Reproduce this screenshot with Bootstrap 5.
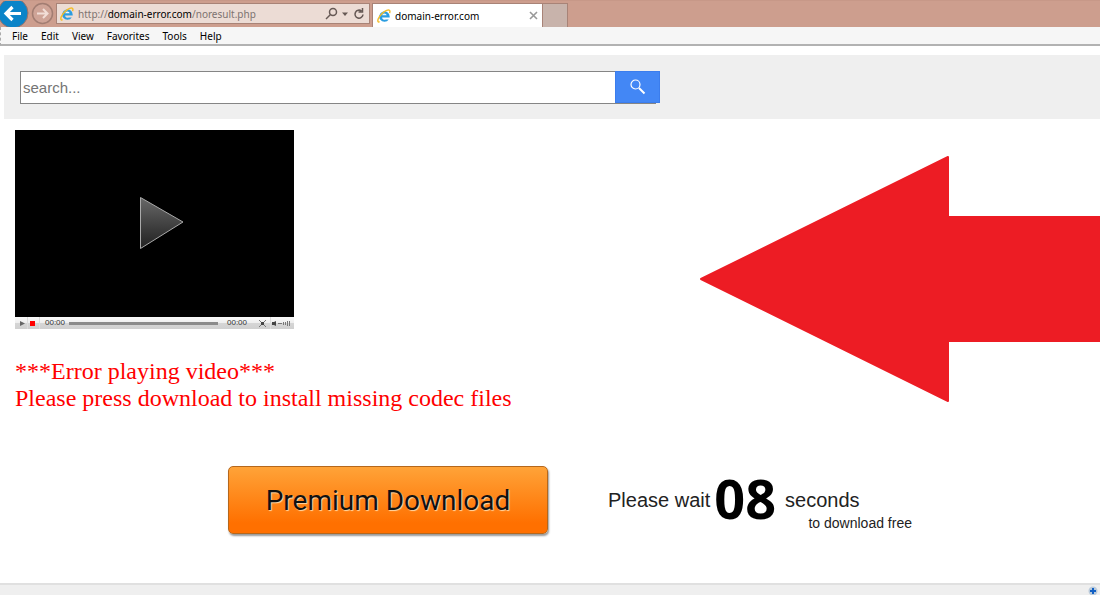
<!DOCTYPE html>
<html lang="en">
<head>
<meta charset="utf-8">
<meta name="viewport" content="width=device-width, initial-scale=1">
<title>domain-error.com</title>
<link rel="stylesheet" href="https://cdn.jsdelivr.net/npm/bootstrap@5.3.0/dist/css/bootstrap.min.css">
<style>
body { font-family: "Noto Sans", "Open Sans", sans-serif; font-size: 10px; line-height: 16px; color: #000; background: #fff; }
svg { display: block; flex: none; }
.chrome-bar { height: 27px; background: #cd9e8e; border-top: 1px solid #c79888; }
.chrome-bar button { background: none; border: 0; padding: 0; }
.address { width: 314px; height: 21px; margin: 2px 2px 0 2px; background: #ecdcd5; border: 1px solid #a88377; padding: 0 4px 0 3px; }
.address-text { color: #7d7370; }
.address-text b { color: #000; font-weight: 400; }
.tab-open { width: 171px; height: 24px; margin-top: 2px; background: #fff; border: 1px solid #a88377; border-bottom: 0; padding: 0 4px; }
.tab-new { width: 25px; height: 24px; margin-top: 2px; }
.chrome-bar .tab-new { background: #c8b3ab; border: 1px solid #a88377; border-left: 0; border-bottom: 0; }
.menu-bar { height: 19px; background: #f6f6f6; border-bottom: 2px solid #b2b2b2; border-left: 1px dashed #aaa; padding-left: 11px; gap: 13px; }
.menu-bar a { color: #000; text-decoration: none; }
.search-band { margin: 9px 0 0 4px; padding: 16px; height: 64px; background: #efefef; }
.search-box { width: 640px; max-width: 100%; }
.search-box input { height: 33px; border: 1px solid #858585; border-right: 0; padding: 0 2px; font: 15px "Liberation Sans", sans-serif; color: #333; border-radius: 0; min-width: 0; }
.search-box input::placeholder { color: #757575; opacity: 1; }
.search-box button { width: 45px; height: 32px; background: #4387f5; border: 1px solid #3b7ded; padding: 0 0 0 14px; }
.search-box button::after { content: ""; position: absolute; left: -1px; right: 3px; bottom: -2px; height: 1px; background: #858585; }
.player { width: 279px; max-width: 100%; }
.player-screen { height: 187px; background: #000; border: 0; padding: 0 0 2px 14px; }
.player-bar { height: 12px; background: linear-gradient(#fafafa, #eee 50%, #d6d6d6 50%, #d0d0d0); font: 8px/12px "Liberation Sans", sans-serif; color: #333; }
.player-bar button { border: 0; background: none; padding: 0; }
.player-track { height: 3px; background: #8b8b8b; }
.time-now { width: 28px; text-align: center; }
.time-total { width: 38px; text-align: center; }
.video-error { margin: 29px 0 0; font: 24px/27px "Liberation Serif", serif; color: #f00; }
.page-main { padding: 11px 0 0 15px; }
.pointer-art { margin-top: 25px; }
.download-row { padding: 54px 0 0 228px; gap: 60px; }
.premium { width: 320px; height: 68px; border: 1px solid #b5671c; border-radius: 5px; background: linear-gradient(#ffa338, #ff7000 85%); box-shadow: 1px 2px 2px #999; font: 28px Roboto, sans-serif; color: #111; text-shadow: 1px 1px 1px #ffd9a8; }
.countdown { width: 304px; font: 20px/24px "Liberation Sans", sans-serif; color: #222; padding-top: 14px; }
.countdown-label { padding-top: 4px; }
.countdown-number { font: bold 54px/36px "Noto Sans", sans-serif; color: #000; margin: 0 9px 0 4px; }
.countdown-note { font-size: 14px; line-height: 14px; }
.status-bar { height: 12px; background: #efefef; border-top: 2px solid #e0e0e0; padding-right: 2px; overflow: hidden; }
</style>
</head>
<body class="d-flex flex-column min-vh-100">
<svg width="0" height="0" class="position-absolute" aria-hidden="true">
  <symbol id="browser-logo" viewBox="0 0 16 16">
    <path d="M14.500 8.500A6 6 0 1 0 13.500 12H10A2.800 2.800 0 0 1 5.800 9.800H14.500Z" fill="#2b9de0"/>
    <path d="M5.800 7.200a2.700 2.700 0 0 1 5.300 0Z" fill="#ecf7fd"/>
    <path d="M3 14.500C.2 16 .3 12.400 3 8.500 6 4 11 .7 13.800 1.300c1.200.4 1.200 1.800.5 3.400" fill="none" stroke="#f4bd28" stroke-width="1.600"/>
  </symbol>
</svg>
<header>
  <div class="chrome-bar d-flex align-items-start">
    <button type="button" aria-label="Back"><svg width="30" height="26" viewBox="0 0 30 26"><circle cx="13" cy="12" r="15" fill="#0b84c8" stroke="#a07468"/><path d="M21 12.500H7M12.500 6 6 12.500l6.500 6.500" fill="none" stroke="#fff" stroke-width="3.200"/></svg></button>
    <button type="button" aria-label="Forward"><svg width="24" height="26" viewBox="0 0 24 26"><circle cx="12.500" cy="12.500" r="10" fill="#cfa497" stroke="#a27d72" stroke-width="1.500"/><path d="M7 12.500h10M13 8l4.500 4.500L13 17" fill="none" stroke="#f2ded7" stroke-width="2"/></svg></button>
    <div class="address d-flex align-items-center">
      <svg width="14" height="14"><use href="#browser-logo"/></svg>
      <span class="address-text ms-1 flex-grow-1">http://<b>domain-error.com</b>/noresult.php</span>
      <button type="button" aria-label="Search and refresh"><svg width="40" height="18" viewBox="0 0 40 18" fill="none" stroke="#665955" stroke-width="1.500"><circle cx="8" cy="7" r="3.500"/><path d="M5.500 9.500 1 14"/><path d="M17 7.500h6l-3 3.500z" fill="#665955" stroke="none"/><path d="M36.500 6A4 4 0 1 0 38 9.500M37.500 3v4h-4"/></svg></button>
    </div>
    <div class="tab-open d-flex align-items-center">
      <svg width="14" height="14"><use href="#browser-logo"/></svg>
      <span class="ms-1 flex-grow-1">domain-error.com</span>
      <button type="button" aria-label="Close tab"><svg width="9" height="9" viewBox="0 0 9 9"><path d="m1 1 7 7M8 1 1 8" stroke="#999" stroke-width="1.600"/></svg></button>
    </div>
    <button type="button" class="tab-new" aria-label="New tab"></button>
  </div>
  <nav class="menu-bar d-flex align-items-center">
    <a href="#">File</a><a href="#">Edit</a><a href="#">View</a><a href="#">Favorites</a><a href="#">Tools</a><a href="#">Help</a>
  </nav>
</header>
<div class="search-band">
  <form class="search-box d-flex align-items-start">
    <input type="text" class="flex-grow-1" placeholder="search..." aria-label="Search">
    <button type="button" class="position-relative rounded-0" aria-label="Search"><svg width="16" height="16" viewBox="0 0 16 16" fill="none" stroke="#fff"><circle cx="5.500" cy="5.500" r="4.500" stroke-width="1.200"/><path d="m9 9 5.500 5.500" stroke-width="2"/></svg></button>
  </form>
</div>
<main class="flex-grow-1">
  <div class="page-main d-flex justify-content-between">
    <section>
      <div class="player">
        <button type="button" class="player-screen w-100 d-flex align-items-center justify-content-center" aria-label="Play video">
          <svg width="46" height="54" viewBox="0 0 46 54"><defs><linearGradient id="play-fill" x1="0" y1="0" x2="0" y2="1"><stop stop-color="#686868"/><stop offset=".6" stop-color="#3c3c3c"/><stop offset="1" stop-color="#222"/></linearGradient></defs><path d="M1.500 1.500v51L44 26z" fill="url(#play-fill)" stroke="#aaa"/></svg>
        </button>
        <div class="player-bar d-flex align-items-center">
          <button type="button" aria-label="Play"><svg width="26" height="12" viewBox="0 0 26 12"><path d="M5 4v5l5-2.500z" fill="#666"/><path d="M12.500 0v12M24.500 0v12" stroke="#ddd"/><path d="M15 4h5v5h-5z" fill="#f00"/></svg></button>
          <span class="time-now">00:00</span>
          <div class="player-track flex-grow-1"></div>
          <span class="time-total">00:00</span>
          <button type="button" aria-label="Full screen and volume"><svg width="38" height="12" viewBox="0 0 38 12"><path d="M14.500 0v12" stroke="#ddd"/><path d="m3 3 7 7m0-7-7 7" stroke="#777"/><path d="M5 5h3v3H5zM16 5h2l2-1v5l-2-1h-2z" fill="#444"/><path d="M22 6.500h4M27.500 5v3M29.500 5v3M31.500 4v5M33.500 4v5" stroke="#777"/></svg></button>
        </div>
      </div>
      <p class="video-error">***Error playing video***<br>Please press download to install missing codec files</p>
    </section>
    <svg class="pointer-art" width="400" height="248" viewBox="0 0 400 248" role="img" aria-label="Arrow pointing left"><path d="M248 2v60h153v124H248v60L1 124z" fill="#ed1c24" stroke="#ed1c24" stroke-width="2" stroke-linejoin="round"/></svg>
  </div>
  <div class="download-row d-flex align-items-start">
    <button type="button" class="premium">Premium Download</button>
    <div class="countdown">
      <div class="d-flex align-items-center"><span class="countdown-label">Please wait</span><span class="countdown-number">08</span><span class="countdown-label">seconds</span></div>
      <div class="countdown-note text-end">to download free</div>
    </div>
  </div>
</main>
<footer class="status-bar d-flex justify-content-end">
  <svg width="10" height="12" viewBox="0 0 10 12"><circle cx="5" cy="6" r="4.500" fill="#b9cadb"/><path d="M5 3v6M2 6h6" stroke="#1260c4" stroke-width="2"/></svg>
</footer>
<script src="https://cdn.jsdelivr.net/npm/bootstrap@5.3.0/dist/js/bootstrap.bundle.min.js"></script>
</body>
</html>
